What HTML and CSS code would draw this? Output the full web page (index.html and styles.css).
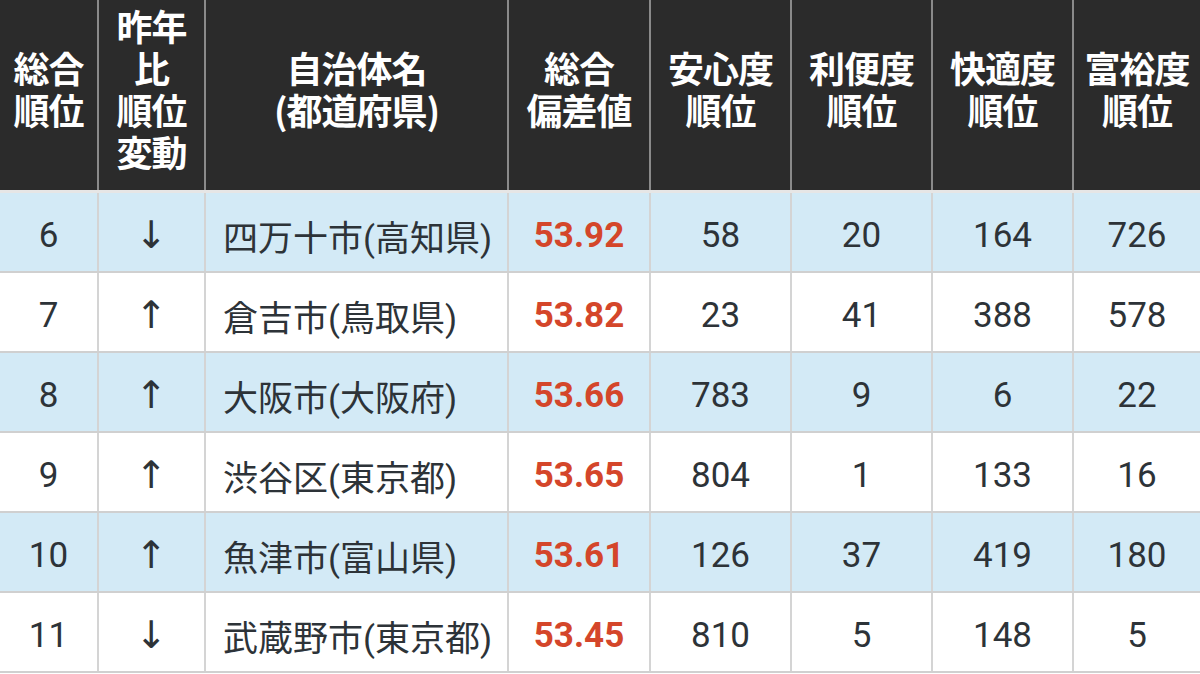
FILE: index.html
```html
<!DOCTYPE html>
<html lang="ja">
<head>
<meta charset="utf-8">
<link rel="stylesheet" href="styles.css">
</head>
<body>
<table class="rank">
  <colgroup>
    <col class="c1"><col class="c2"><col class="c3"><col class="c4"><col class="c5"><col class="c6"><col class="c7"><col class="c8">
  </colgroup>
  <thead>
    <tr>
      <th>総合<br>順位</th>
      <th>昨年<br>比<br>順位<br>変動</th>
      <th>自治体名<br>(都道府県)</th>
      <th>総合<br>偏差値</th>
      <th>安心度<br>順位</th>
      <th>利便度<br>順位</th>
      <th>快適度<br>順位</th>
      <th>富裕度<br>順位</th>
    </tr>
  </thead>
  <tbody>
    <tr class="blue"><td>6</td><td class="arr">↓</td><td class="name">四万十市(高知県)</td><td class="score">53.92</td><td>58</td><td>20</td><td>164</td><td>726</td></tr>
    <tr><td>7</td><td class="arr">↑</td><td class="name">倉吉市(鳥取県)</td><td class="score">53.82</td><td>23</td><td>41</td><td>388</td><td>578</td></tr>
    <tr class="blue"><td>8</td><td class="arr">↑</td><td class="name">大阪市(大阪府)</td><td class="score">53.66</td><td>783</td><td>9</td><td>6</td><td>22</td></tr>
    <tr><td>9</td><td class="arr">↑</td><td class="name">渋谷区(東京都)</td><td class="score">53.65</td><td>804</td><td>1</td><td>133</td><td>16</td></tr>
    <tr class="blue"><td>10</td><td class="arr">↑</td><td class="name">魚津市(富山県)</td><td class="score">53.61</td><td>126</td><td>37</td><td>419</td><td>180</td></tr>
    <tr><td>11</td><td class="arr">↓</td><td class="name">武蔵野市(東京都)</td><td class="score">53.45</td><td>810</td><td>5</td><td>148</td><td>5</td></tr>
  </tbody>
</table>
</body>
</html>
```

FILE: styles.css
```css
html, body {
  margin: 0;
  padding: 0;
  background: #ffffff;
  overflow: hidden;
}
body {
  width: 1200px;
  height: 674px;
  font-family: Roboto, "Noto Sans CJK JP", sans-serif;
}
.rank {
  width: 1200px;
  border-collapse: collapse;
  table-layout: fixed;
}
.c1 { width: 98px; }
.c2 { width: 107px; }
.c3 { width: 303px; }
.c4 { width: 142px; }
.c5 { width: 141px; }
.c6 { width: 141px; }
.c7 { width: 141px; }
.c8 { width: 127px; }

.rank th {
  height: 176px;
  padding: 0 0 14px 0;
  background: #2b2b2b;
  color: #ffffff;
  font-family: "Noto Sans CJK JP", sans-serif;
  font-weight: 700;
  font-size: 36px;
  line-height: 42px;
  letter-spacing: -1px;
  text-align: center;
  vertical-align: middle;
  border-left: 2px solid #8a8a8a;
  border-bottom: 3px solid #e6e6e6;
}
.rank th:first-child { border-left: none; }

.rank td {
  height: 72px;
  padding: 6px 0 0 0;
  color: #2d3338;
  font-size: 35px;
  text-align: center;
  vertical-align: middle;
  border-left: 2px solid #d4d4d4;
  border-bottom: 2px solid #d0d0d0;
}
.rank td:first-child { border-left: none; }
.rank tr.blue td { background: #d3eaf6; }
.rank td.name {
  text-align: left;
  padding-left: 17px;
}
.rank td.arr {
  font-family: "DejaVu Sans", sans-serif;
  font-size: 38px;
}
.rank td.score {
  color: #d4462a;
  font-weight: 700;
}
```
